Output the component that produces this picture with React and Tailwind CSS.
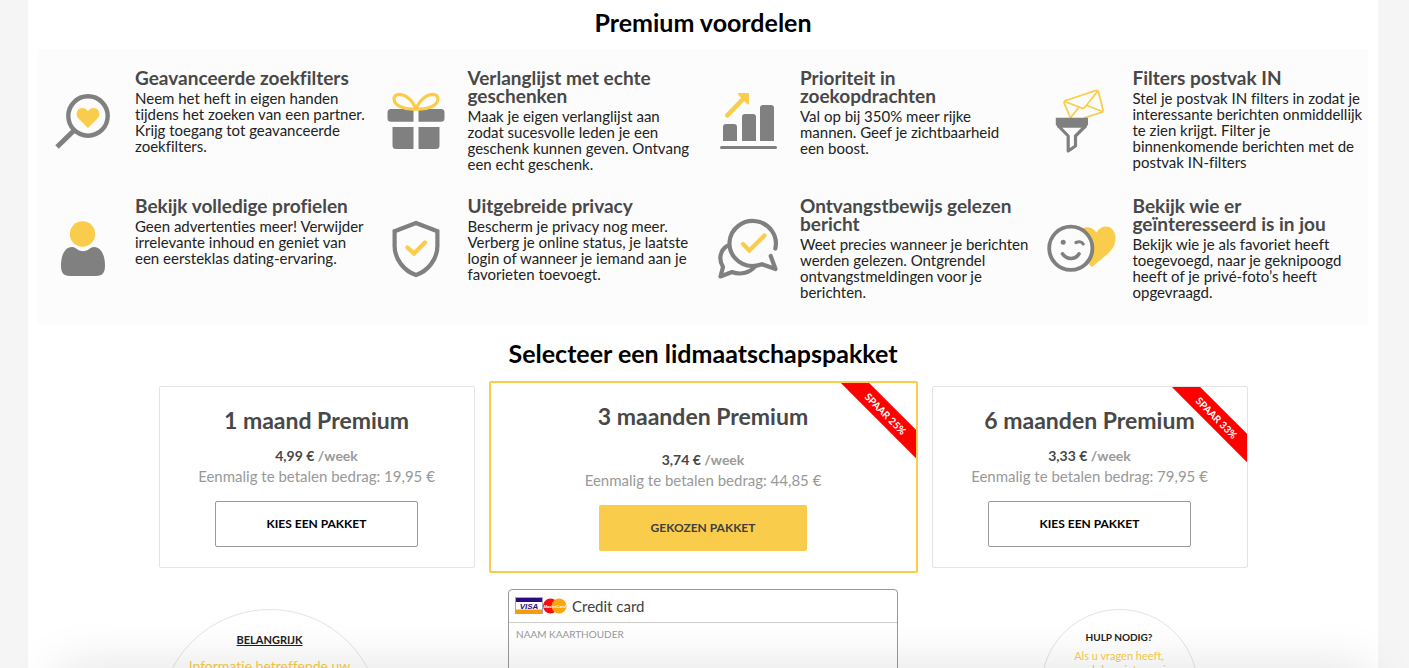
const GRAY = '#808080';
const YELLOW = '#f9cd4b';

function Icon({ children }) {
  return (
    <svg className="w-[70px] h-[70px] ml-[10px] mr-[17px] shrink-0" viewBox="0 0 70 70" fill="none" aria-hidden="true">
      {children}
    </svg>
  );
}

const SearchHeart = () => (
  <Icon>
    <circle cx="40" cy="30" r="19.7" stroke={GRAY} strokeWidth="4.4" />
    <path d="M26.5 44 9 61" stroke={GRAY} strokeWidth="5" />
    <path d="M40 42 30.5 32.5C26.8 28.5 29 22 34.3 22c2.7 0 4.7 1.4 5.7 3.3 1-1.9 3-3.3 5.7-3.3 5.3 0 7.5 6.5 3.8 10.5Z" fill={YELLOW} />
  </Icon>
);

const Gift = () => (
  <Icon>
    <path d="M10 23H32.5V35.7H10A3.5 3.5 0 0 1 6.5 32.2V26.5A3.5 3.5 0 0 1 10 23Z" fill={GRAY} />
    <path d="M37.5 23H60A3.5 3.5 0 0 1 63.5 26.5V32.2A3.5 3.5 0 0 1 60 35.7H37.5Z" fill={GRAY} />
    <path d="M11.5 41H32.5V63H15A3.5 3.5 0 0 1 11.5 59.5Z" fill={GRAY} />
    <path d="M37.5 41H58.5V59.5A3.5 3.5 0 0 1 55 63H37.5Z" fill={GRAY} />
    <path d="M35 23C31 13 24 8.3 18 8.3 11 9 11.5 17 19 20.5 24 22.7 30 23.5 35 23Z" stroke={YELLOW} strokeWidth="3.2" />
    <path d="M35 23C39 13 46 8.3 52 8.3 59 9 58.5 17 51 20.5 46 22.7 40 23.5 35 23Z" stroke={YELLOW} strokeWidth="3.2" />
  </Icon>
);

const Growth = () => (
  <Icon>
    <path d="M10 55V41a3 3 0 0 1 3-3h8a3 3 0 0 1 3 3V55Z" fill={GRAY} />
    <path d="M29 55V31a3 3 0 0 1 3-3h8a3 3 0 0 1 3 3V55Z" fill={GRAY} />
    <path d="M47 55V22a3 3 0 0 1 3-3h8a3 3 0 0 1 3 3V55Z" fill={GRAY} />
    <path d="M8.5 61.5H62.5" stroke={GRAY} strokeWidth="3" strokeLinecap="round" />
    <path d="M14.3 29.3 32 11" stroke={YELLOW} strokeWidth="4.6" strokeLinecap="round" />
    <path d="M26 8H35V17.500Z" fill={YELLOW} stroke={YELLOW} strokeWidth="2" strokeLinejoin="round" />
  </Icon>
);

const MailFilter = () => (
  <Icon>
    <g stroke={YELLOW} strokeWidth="1.8" strokeLinejoin="round">
      <path d="M24.5 32 18.3 17.5Q17.6 15.2 19.8 14.5L49.5 4.7Q51.8 4 52.5 6.2L57 23.5Q57.5 25.7 55.4 26.4L38 32" />
      <path d="M18.5 15.5 34.5 21.5Q37.5 23.5 39.5 20.5L51.5 5.5" />
      <path d="M24.5 32 33 21M56.5 25.5 41 19.5" />
    </g>
    <path d="M9.8 31.7H42V38.5L40 41.7H12L9.8 38.5Z" fill={GRAY} />
    <path d="M12 39.5 22.2 50V65L29.5 60V50L40 39.5" stroke={GRAY} strokeWidth="3.2" strokeLinejoin="round" />
  </Icon>
);

const Person = () => (
  <Icon>
    <circle cx="34.5" cy="20" r="12.7" fill={YELLOW} />
    <path d="M24 33C16 33 13 43 13 51 13 58.5 15 62 22 62H48C55 62 57 58.5 57 51 57 43 54 33 46 33 43.5 33 42.5 34 40.5 35.5 37 37.7 33 37.7 29.5 35.5 27.5 34 26.5 33 24 33Z" fill={GRAY} />
  </Icon>
);

const Shield = () => (
  <Icon>
    <path d="M35 9 56.4 17.2V32C56.4 45 47 57 35 61 23 57 13.6 45 13.6 32V17.2Z" stroke={GRAY} strokeWidth="4.2" />
    <path d="M26.5 33.5 33 39.5 44 28.5" stroke={YELLOW} strokeWidth="4.4" strokeLinecap="round" />
  </Icon>
);

const ReadReceipt = () => (
  <Icon>
    <g stroke={GRAY} strokeWidth="4.2" strokeLinecap="round" strokeLinejoin="round">
      <path d="M62.3 34.5A23.2 22.5 0 1 0 39 52C43 52 46 51.2 49 50.2L62.5 55 57.7 42" />
      <path d="M14 32C7.5 36 5 45 10 53L7.5 62.5 19 58C28 61.500 37 58.5 42 52.5" />
    </g>
    <path d="M30 30 36.3 36.5 51.5 21.5" stroke={YELLOW} strokeWidth="4.2" strokeLinecap="round" />
  </Icon>
);

const WinkHeart = () => (
  <Icon>
    <path d="M46 53C42 49 30 40 30 27 30 15 42 8 50.5 18.5 56 9 69.5 11 69.5 24.5 69.5 36 60 41 46 53Z" fill={YELLOW} />
    <circle cx="24.8" cy="34.3" r="21.6" fill="#fcfcfc" stroke={GRAY} strokeWidth="3.8" />
    <circle cx="17.2" cy="28.3" r="2.5" fill={GRAY} />
    <path d="M30 28.5C33 27.2 36 28 37.2 30" stroke={GRAY} strokeWidth="3.2" strokeLinecap="round" />
    <path d="M16.5 39.8C20.5 46 29.5 46 33 39.8" stroke={GRAY} strokeWidth="3.6" strokeLinecap="round" />
  </Icon>
);

const benefits = [
  {
    icon: SearchHeart,
    title: 'Geavanceerde zoekfilters',
    text: 'Neem het heft in eigen handen\ntijdens het zoeken van een partner.\nKrijg toegang tot geavanceerde\nzoekfilters.',
  },
  {
    icon: Gift,
    title: 'Verlanglijst met echte\ngeschenken',
    text: 'Maak je eigen verlanglijst aan\nzodat sucesvolle leden je een\ngeschenk kunnen geven. Ontvang\neen echt geschenk.',
  },
  {
    icon: Growth,
    title: 'Prioriteit in\nzoekopdrachten',
    text: 'Val op bij 350% meer rijke\nmannen. Geef je zichtbaarheid\neen boost.',
  },
  {
    icon: MailFilter,
    title: 'Filters postvak IN',
    text: 'Stel je postvak IN filters in zodat je\ninteressante berichten onmiddellijk\nte zien krijgt. Filter je\nbinnenkomende berichten met de\npostvak IN-filters',
  },
  {
    icon: Person,
    title: 'Bekijk volledige profielen',
    text: 'Geen advertenties meer! Verwijder\nirrelevante inhoud en geniet van\neen eersteklas dating-ervaring.',
  },
  {
    icon: Shield,
    title: 'Uitgebreide privacy',
    text: 'Bescherm je privacy nog meer.\nVerberg je online status, je laatste\nlogin of wanneer je iemand aan je\nfavorieten toevoegt.',
  },
  {
    icon: ReadReceipt,
    title: 'Ontvangstbewijs gelezen\nbericht',
    text: 'Weet precies wanneer je berichten\nwerden gelezen. Ontgrendel\nontvangstmeldingen voor je\nberichten.',
  },
  {
    icon: WinkHeart,
    title: 'Bekijk wie er\ngeïnteresseerd is in jou',
    text: 'Bekijk wie je als favoriet heeft\ntoegevoegd, naar je geknipoogd\nheeft of je privé-foto’s heeft\nopgevraagd.',
  },
];

const packages = [
  { name: '1 maand Premium', price: '4,99 €', total: '19,95 €' },
  { name: '3 maanden Premium', price: '3,74 €', total: '44,85 €', badge: 'SPAAR 25%', selected: true },
  { name: '6 maanden Premium', price: '3,33 €', total: '79,95 €', badge: 'SPAAR 33%' },
];

function Benefit({ icon: BenefitIcon, title, text }) {
  return (
    <div className="flex h-[103px] mb-[25px]">
      <div className="flex items-center">
        <BenefitIcon />
      </div>
      <div className="whitespace-pre">
        <h3 className="text-[19px] leading-[18px] font-bold text-[#484848] mb-[3px]">{title}</h3>
        <p className="text-[15px] leading-4 text-[#222]">{text}</p>
      </div>
    </div>
  );
}

function PackageCard({ name, price, total, badge, selected }) {
  return (
    <section
      className={`relative overflow-hidden rounded-xs text-center bg-white pt-[18px] ${
        selected ? 'h-48 border-2 border-[#f9cd4b]' : 'h-[182px] border border-[#e4e4e4]'
      }`}
    >
      <h3 className={`text-[23px] leading-[30px] font-bold text-[#484848] ${selected ? 'mb-[18px]' : 'mb-[10px]'}`}>{name}</h3>
      <p className="text-[14px] leading-[21px] font-bold text-[#999]">
        <span className="text-[#484848]">{price}</span> /week
      </p>
      <p className="text-[15px] leading-[21px] text-[#999]">Eenmalig te betalen bedrag: {total}</p>
      <button
        type="button"
        className={`mt-[14px] h-[46px] rounded-xs text-[12px] font-bold ${
          selected ? 'w-52 bg-[#f9cd4b] text-[#404040]' : 'w-[203px] border border-[#999] bg-white text-black'
        }`}
      >
        {selected ? 'GEKOZEN PAKKET' : 'KIES EEN PAKKET'}
      </button>
      {badge && (
        <span className="absolute top-5 -right-[29px] w-[120px] h-5 pl-[2px] rotate-45 bg-[#ff0000] text-[10px] leading-5 font-bold text-white">
          {badge}
        </span>
      )}
    </section>
  );
}

function CardLogos() {
  return (
    <svg className="w-[52px] h-[18px]" viewBox="0 0 52 18" aria-hidden="true">
      <rect x="0.5" y="0.5" width="27" height="16" fill="#fff" stroke="#a9a5c0" />
      <rect x="1" y="1" width="26" height="4" fill="#2a0a80" />
      <rect x="1" y="12.5" width="26" height="4" fill="#f39b0c" />
      <text x="14" y="11.8" textAnchor="middle" fontFamily="Liberation Sans" fontSize="8" fontWeight="bold" fontStyle="italic" fill="#2a0a80">VISA</text>
      <circle cx="35.5" cy="9" r="7.5" fill="#fb0a14" />
      <circle cx="44" cy="9" r="7.5" fill="#fda50c" />
      <text x="39.7" y="10.5" textAnchor="middle" fontFamily="Liberation Sans" fontSize="4" fontWeight="bold" fontStyle="italic" fill="#fff">MasterCard</text>
    </svg>
  );
}

export default function App() {
  return (
    <div className="relative h-screen overflow-hidden bg-[#f5f5f5] pl-7 pr-[31px] font-['Lato',sans-serif] [font-variant-ligatures:none]">
      <main className="min-h-full bg-white px-[10px] pt-[6px]">
        <h2 className="text-center text-[25px] leading-8 font-bold text-black mb-[11px]">Premium voordelen</h2>

        <div className="grid grid-cols-4 bg-[#fcfcfc] pt-5 mb-3">
          {benefits.map((b) => (
            <Benefit key={b.title} {...b} />
          ))}
        </div>

        <h2 className="text-center text-[25px] leading-8 font-bold text-black mb-[12px]">Selecteer een lidmaatschapspakket</h2>

        <div className="grid grid-cols-[316fr_429fr_316fr] gap-x-[14px] items-center max-w-[1089px] mx-auto">
          {packages.map((p) => (
            <PackageCard key={p.name} {...p} />
          ))}
        </div>

        <div className="grid grid-cols-[316fr_429fr_316fr] gap-x-[14px] items-start max-w-[1089px] mx-auto mt-4">
          <aside className="mt-5 size-[222px] rounded-full border border-[#e4e4e4] pt-[22px] text-center">
            <h4 className="text-[11px] leading-4 font-bold text-[#222] underline">BELANGRIJK</h4>
            <p className="mt-2 px-6 text-[14px] leading-5 text-[#f9cd4b]">Informatie betreffende uw aankoop</p>
          </aside>

          <form className="w-[390px] mx-auto rounded-t border border-[#999]" onSubmit={(e) => e.preventDefault()}>
            <div className="flex items-center gap-[5px] h-[33px] pl-[6px] border-b border-[#ccc] text-[15px] text-[#404040]">
              <CardLogos />
              <span>Credit card</span>
            </div>
            <label htmlFor="cardholder" className="block pl-[7px] pt-[3px] text-[10px] leading-4 text-[#999]">
              NAAM KAARTHOUDER
            </label>
            <input id="cardholder" type="text" className="w-full h-8 px-2 text-sm outline-none" />
          </form>

          <aside className="mt-5 mr-[50px] justify-self-end size-[157px] rounded-full border border-[#e4e4e4] pt-[19px] text-center">
            <h4 className="text-[10px] leading-4 font-bold text-[#222]">HULP NODIG?</h4>
            <p className="mt-1 px-4 text-[11px] leading-[14px] text-[#f9cd4b]">
              Als u vragen heeft,
              <br />
              aarzel dan niet om via
            </p>
          </aside>
        </div>
      </main>

      {/* shadow thrown up by the bar under the fold */}
      <div className="pointer-events-none absolute top-full left-15 right-10 h-10 shadow-[0_0_50px_rgba(0,0,0,0.13)]" />
    </div>
  );
}
